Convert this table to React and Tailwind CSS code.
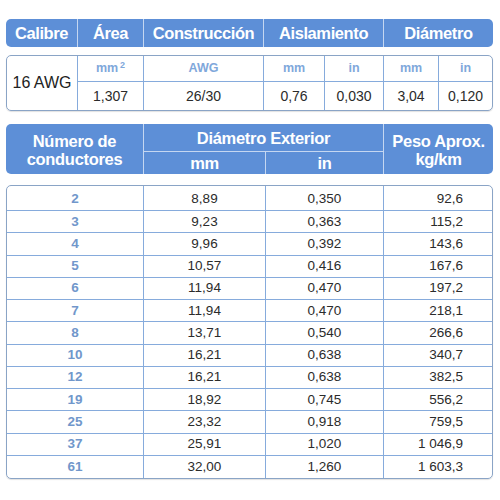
import React from "react";

const font = { fontFamily: '"Liberation Sans", Arial, sans-serif' };

const rows = [
  ["2", "8,89", "0,350", "92,6"],
  ["3", "9,23", "0,363", "115,2"],
  ["4", "9,96", "0,392", "143,6"],
  ["5", "10,57", "0,416", "167,6"],
  ["6", "11,94", "0,470", "197,2"],
  ["7", "11,94", "0,470", "218,1"],
  ["8", "13,71", "0,540", "266,6"],
  ["10", "16,21", "0,638", "340,7"],
  ["12", "16,21", "0,638", "382,5"],
  ["19", "18,92", "0,745", "556,2"],
  ["25", "23,32", "0,918", "759,5"],
  ["37", "25,91", "1,020", "1 046,9"],
  ["61", "32,00", "1,260", "1 603,3"],
];

export default function App() {
  const hdrCell = "flex items-center justify-center text-white font-bold text-[16.5px] tracking-[-0.4px]";
  const lbl = "flex items-center justify-center text-[#7fa8db] font-bold text-[12.5px] border-b border-[#86abdc]";
  const val = "flex items-center justify-center text-[#2b2b2b] text-[14px]";
  return (
    <div className="w-[500px] h-[500px] bg-white pt-[19px] pl-[6px]" style={font}>
      <div className="w-[487px] flex flex-col">
        {/* top header */}
        <div className="grid grid-cols-[71px_66px_120px_120px_110px] h-[28px] bg-[#5d8fd7] rounded-[5px] overflow-hidden">
          <div className={hdrCell}>Calibre</div>
          <div className={hdrCell + " border-l border-[#c5d7f1]"}>Área</div>
          <div className={hdrCell + " border-l border-[#c5d7f1]"}>Construcción</div>
          <div className={hdrCell + " border-l border-[#c5d7f1]"}>Aislamiento</div>
          <div className={hdrCell + " border-l border-[#c5d7f1]"}>Diámetro</div>
        </div>

        {/* top values box */}
        <div className="mt-[8px] h-[56px] border border-[#8aa4c6] rounded-[5px] shadow-[0_1px_1px_rgba(0,0,0,0.12)] grid grid-cols-[70px_66px_120px_61px_59px_55px_54px] grid-rows-[26px_28px]">
          <div className="row-span-2 flex items-center justify-center text-[#222] text-[16px]">16 AWG</div>
          <div className={lbl + " border-l"}>mm<span className="text-[9px] ml-[2px] -mt-[6px]">2</span></div>
          <div className={lbl + " border-l"}>AWG</div>
          <div className={lbl + " border-l"}>mm</div>
          <div className={lbl + " border-l"}>in</div>
          <div className={lbl + " border-l"}>mm</div>
          <div className={lbl + " border-l"}>in</div>
          <div className={val + " border-l border-[#86abdc]"}>1,307</div>
          <div className={val + " border-l border-[#86abdc]"}>26/30</div>
          <div className={val + " border-l border-[#86abdc]"}>0,76</div>
          <div className={val + " border-l border-[#86abdc]"}>0,030</div>
          <div className={val + " border-l border-[#86abdc]"}>3,04</div>
          <div className={val + " border-l border-[#86abdc]"}>0,120</div>
        </div>

        {/* lower header */}
        <div className="mt-[13px] h-[50px] bg-[#5d8fd7] rounded-[5px] overflow-hidden grid grid-cols-[137px_122px_118px_110px] grid-rows-[28px_22px] text-white font-bold text-[16.5px] tracking-[-0.3px]">
          <div className="row-span-2 flex flex-col items-center justify-center leading-[18px] pt-[1px]">
            <span>Número de</span>
            <span>conductores</span>
          </div>
          <div className="col-span-2 flex items-center justify-center border-l border-b border-[#c5d7f1] pt-[1px]">Diámetro Exterior</div>
          <div className="row-span-2 flex flex-col items-center justify-center leading-[18px] border-l border-[#c5d7f1] pt-[1px]">
            <span>Peso Aprox.</span>
            <span>kg/km</span>
          </div>
          <div className="flex items-center justify-center border-l border-[#c5d7f1]">mm</div>
          <div className="flex items-center justify-center border-l border-[#c5d7f1]">in</div>
        </div>

        {/* body */}
        <div className="mt-[11px] h-[294px] border border-[#8aa4c6] rounded-[5px] shadow-[0_1px_1px_rgba(0,0,0,0.12)] grid grid-cols-[136px_122px_118px_109px] grid-rows-[25px_repeat(12,1fr)] text-[13.5px]">
          {rows.map((r, i) => {
            const last = i === rows.length - 1;
            const b = last ? "" : " border-b border-[#86abdc]";
            const pt = i === 0 ? " pt-[3px]" : "";
            return (
              <React.Fragment key={r[0]}>
                <div className={"flex items-center justify-center font-bold text-[#7197cb]" + b + pt}>{r[0]}</div>
                <div className={"flex items-center justify-center text-[#2b2b2b] border-l border-[#86abdc]" + b + pt}>{r[1]}</div>
                <div className={"flex items-center justify-center text-[#2b2b2b] border-l border-[#86abdc]" + b + pt}>{r[2]}</div>
                <div className={"flex items-center justify-end pr-[29px] text-[#2b2b2b] border-l border-[#86abdc]" + b + pt}>{r[3]}</div>
              </React.Fragment>
            );
          })}
        </div>
      </div>
    </div>
  );
}
